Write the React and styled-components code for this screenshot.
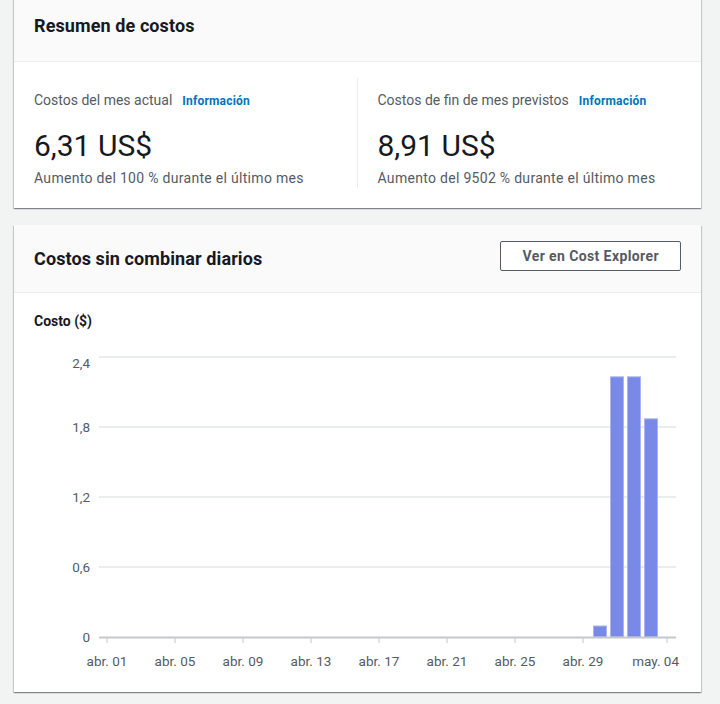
import styled, { createGlobalStyle } from 'styled-components';

const GlobalStyle = createGlobalStyle`
	body {
		margin: 0;
		background: #f2f3f3;
		font-family: Roboto, "Open Sans", sans-serif;
		color: #16191f;
	}
`;

const colors = {
	text: '#16191f',
	muted: '#545b64',
	link: '#0073bb',
	divider: '#eaeded',
	bar: '#7889e8',
};

const Page = styled.div`
	width: 720px;
	height: 704px;
	overflow: hidden;
	padding-left: 14px;
	box-sizing: border-box;
	display: flex;
	flex-direction: column;
	gap: 17px;
`;

const Card = styled.section`
	width: 687px;
	background: #fff;
	box-shadow: 0 1px 1px 0 rgba(0, 28, 36, 0.3), 1px 1px 1px 0 rgba(0, 28, 36, 0.15),
		-1px 1px 1px 0 rgba(0, 28, 36, 0.15);
	margin-top: ${(props) => (props.$clipped ? '-10px' : '0')};
`;

const CardHeader = styled.header`
	display: flex;
	align-items: center;
	justify-content: space-between;
	box-sizing: border-box;
	height: ${(props) => props.$height}px;
	padding: 0 20px;
	background: #fafafa;
	border-bottom: 1px solid ${colors.divider};
`;

const Title = styled.h2`
	margin: 0;
	font-size: 18px;
	line-height: 22px;
	font-weight: 700;
	color: ${colors.text};
	letter-spacing: 0.1px;
`;

const OutlineButton = styled.button`
	height: 30px;
	padding: 0 21px;
	margin-bottom: 6px;
	background: #fff;
	border: 1px solid ${colors.muted};
	border-radius: 2px;
	font-family: inherit;
	font-size: 14px;
	font-weight: 700;
	color: ${colors.muted};
	letter-spacing: 0.4px;
`;

const SummaryBody = styled.div`
	display: grid;
	grid-template-columns: 1fr 1fr;
	padding: 16px 20px 20px;
`;

const Metric = styled.div`
	padding: 12px 0 0 ${(props) => (props.$first ? '0' : '20px')};
	border-right: ${(props) => (props.$first ? `1px solid ${colors.divider}` : 'none')};
	height: 110px;
	box-sizing: border-box;
`;

const MetricLabel = styled.div`
	display: flex;
	align-items: baseline;
	gap: 10px;
	font-size: 14px;
	line-height: 20px;
	color: ${colors.muted};
`;

const InfoLink = styled.a`
	font-size: 12px;
	font-weight: 700;
	color: ${colors.link};
	text-decoration: none;
	letter-spacing: 0.2px;
`;

const MetricValue = styled.div`
	margin-top: 17px;
	font-size: 30px;
	line-height: 36px;
	color: ${colors.text};
`;

const MetricNote = styled.div`
	margin-top: 4px;
	font-size: 14px;
	line-height: 20px;
	letter-spacing: 0.3px;
	color: ${colors.muted};
`;

const ChartBody = styled.div`
	padding: 18px 20px 20px;
`;

const AxisTitle = styled.div`
	font-size: 14px;
	line-height: 20px;
	font-weight: 700;
	color: ${colors.text};
	margin-bottom: 10px;
`;

const Chart = styled.svg`
	display: block;
	font-family: Roboto, "Open Sans", sans-serif;
	font-size: 13.5px;
	fill: ${colors.muted};
`;

const metrics = [
	{ label: 'Costos del mes actual', value: '6,31 US$', note: 'Aumento del 100 % durante el último mes' },
	{ label: 'Costos de fin de mes previstos', value: '8,91 US$', note: 'Aumento del 9502 % durante el último mes' },
];

// plot geometry (svg coordinates)
const plot = { left: 65, right: 642, zero: 296, perUnit: 70 / 0.6, firstDay: 73, dayWidth: 17 };

const yTicks = [
	{ label: '2,4', y: 16, labelY: 22 },
	{ label: '1,8', y: 86 },
	{ label: '1,2', y: 156 },
	{ label: '0,6', y: 226 },
];

const xTicks = ['abr. 01', 'abr. 05', 'abr. 09', 'abr. 13', 'abr. 17', 'abr. 21', 'abr. 25', 'abr. 29'];

const bars = [
	{ day: 29, value: 0.094 },
	{ day: 30, value: 2.23 },
	{ day: 31, value: 2.23 },
	{ day: 32, value: 1.87 },
];

const CostChart = () => {
	return (
		<Chart width="647" height="331" viewBox="0 0 647 331">
			{yTicks.map((tick) => (
				<g key={tick.label}>
					<line x1={plot.left} x2={plot.right} y1={tick.y} y2={tick.y} stroke="#eaeded" strokeWidth="2" />
					<text x="56" y={tick.labelY || tick.y} textAnchor="end" dominantBaseline="central">
						{tick.label}
					</text>
				</g>
			))}
			<text x="56" y={plot.zero} textAnchor="end" dominantBaseline="central">
				0
			</text>

			{bars.map((bar) => {
				const h = bar.value * plot.perUnit;
				const cx = plot.firstDay + bar.day * plot.dayWidth;
				return (
					<rect
						key={bar.day}
						x={cx - 6.5}
						y={plot.zero - h}
						width="13"
						height={h}
						fill={colors.bar}
						stroke="#a9b4f1"
						strokeWidth="1"
					/>
				);
			})}

			<line x1={plot.left} x2={plot.right} y1={plot.zero + 0.5} y2={plot.zero + 0.5} stroke="#c3c9c9" strokeWidth="2" />
			{xTicks.map((label, i) => {
				const x = plot.firstDay + i * 4 * plot.dayWidth;
				return (
					<g key={label}>
						<line x1={x} x2={x} y1={plot.zero + 1} y2={plot.zero + 6} stroke="#c3c9c9" strokeWidth="1" />
						<text x={x} y="320" textAnchor="middle" dominantBaseline="central">
							{label}
						</text>
					</g>
				);
			})}
			<line x1="633" x2="633" y1={plot.zero + 1} y2={plot.zero + 6} stroke="#c3c9c9" strokeWidth="1" />
			<text x="645" y="320" textAnchor="end" dominantBaseline="central">
				may. 04
			</text>
		</Chart>
	);
};

const App = () => {
	return (
		<>
			<GlobalStyle />
			<Page>
				<Card $clipped>
					<CardHeader $height={72}>
						<Title>Resumen de costos</Title>
					</CardHeader>
					<SummaryBody>
						{metrics.map((metric, i) => (
							<Metric key={metric.label} $first={i === 0}>
								<MetricLabel>
									{metric.label}
									<InfoLink href="#">Información</InfoLink>
								</MetricLabel>
								<MetricValue>{metric.value}</MetricValue>
								<MetricNote>{metric.note}</MetricNote>
							</Metric>
						))}
					</SummaryBody>
				</Card>

				<Card>
					<CardHeader $height={68}>
						<Title>Costos sin combinar diarios</Title>
						<OutlineButton>Ver en Cost Explorer</OutlineButton>
					</CardHeader>
					<ChartBody>
						<AxisTitle>Costo ($)</AxisTitle>
						<CostChart />
					</ChartBody>
				</Card>
			</Page>
		</>
	);
};

export default App;
